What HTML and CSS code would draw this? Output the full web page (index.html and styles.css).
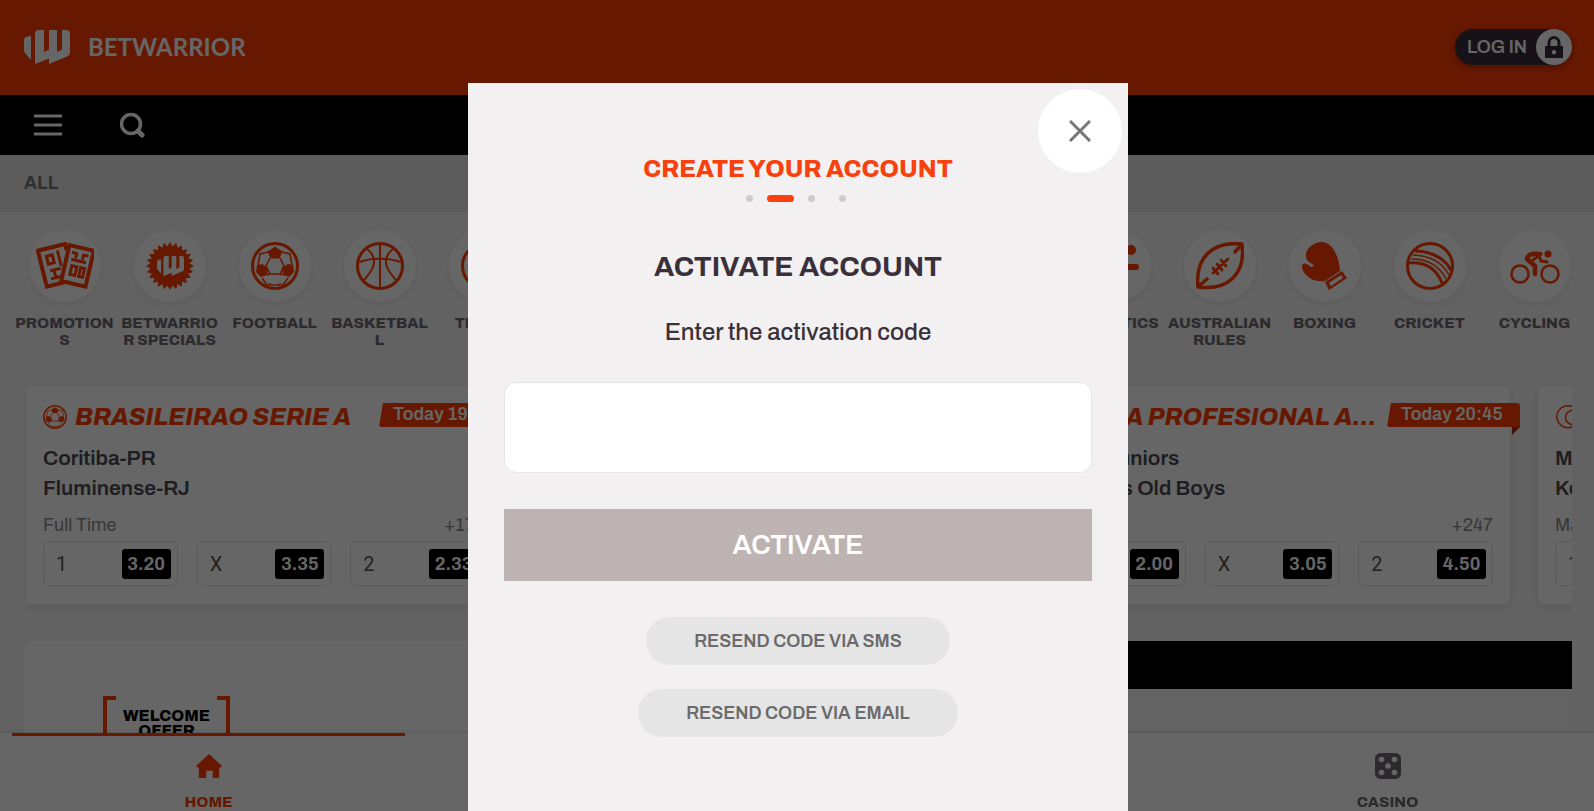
FILE: index.html
```html
<!DOCTYPE html>
<html lang="en">
<head>
    <meta charset="UTF-8">
    <meta name="viewport" content="width=device-width, initial-scale=1.0">
    <title>BetWarrior - Activate Account</title>
    <link rel="stylesheet" href="styles.css">
</head>
<body>
    <svg class="sprite" aria-hidden="true">
        <symbol id="mark" viewBox="0 0 46 34">
            <path d="M7 6v24L1 23Q0 22 0 20V10Q0 7 3 6.500z"/>
            <path d="M11 4Q11 0 15 0h5v22l5-2.500V0h8v22l5-2.500V0h4q4 0 4 4v18q0 3-3 4.500L25 34v-5.500L11 34z"/>
        </symbol>
        <symbol id="football" viewBox="0 0 48 48">
            <circle cx="24" cy="24" r="22.500" fill="none" stroke="currentColor" stroke-width="3"/>
            <path d="M24 4.500l7.500 5-3 7h-9l-3-7zM6 23l5-1 6 4-1 7-6 2-5-5zM42 23l-5-1-6 4 1 7 6 2 5-5z"/>
            <path d="M19 16l-4 8 4 8h10l4-8-4-8M19 32l-3 1M29 32l3 1M17 10L9 12 7 23M31 10l8 2 2 11M11 36l5 7 4-1M37 36l-5 7-4-1M19 43h10" fill="none" stroke="currentColor" stroke-width="1.600"/>
        </symbol>
        <symbol id="tooth" viewBox="0 0 48 48">
            <path d="M24 0l20.800 36H3.200z"/>
        </symbol>
    </svg>

    <header class="header">
        <a class="brand" href="#">
            <svg class="brand-mark"><use href="#mark"/></svg>
            <span class="brand-name">BETWARRIOR</span>
        </a>
        <button class="login" type="button">
            <span>LOG IN</span>
            <span class="login-icon">
                <svg width="18" height="22" viewBox="0 0 18 22"><path d="M4 11V6.500a5 5 0 0 1 10 0V11" fill="none" stroke="currentColor" stroke-width="3"/><path fill-rule="evenodd" d="M0 10h18v12H0zM9 14a2.200 2.200 0 1 0 0 4.400a2.200 2.200 0 1 0 0-4.400z"/></svg>
            </span>
        </button>
    </header>

    <nav class="toolbar">
        <button type="button" aria-label="Menu">
            <svg width="28" height="22" viewBox="0 0 28 22"><path d="M0 2h28M0 11h28M0 20h28" stroke="currentColor" stroke-width="3"/></svg>
        </button>
        <button type="button" aria-label="Search">
            <svg width="26" height="26" viewBox="0 0 26 26" fill="none" stroke="currentColor"><circle cx="11" cy="12" r="9.500" stroke-width="3.500"/><path d="M18 19l4 4" stroke-width="5" stroke-linecap="round"/></svg>
        </button>
    </nav>

    <div class="filter"><a href="#">ALL</a></div>

    <nav class="sports">
        <a class="sport" href="#">
            <span class="sport-icon">
                <svg width="58" height="48" viewBox="0 0 58 48" fill="none" stroke="currentColor" stroke-width="3">
                    <g transform="translate(17 24) rotate(-14)">
                        <path d="M17-12v-6.500H-11v37H7" stroke-width="4"/>
                        <path d="M-4-11h6v8h-6zM8-14V2M-4 4H7M0 4v8M-5 12h10"/>
                    </g>
                    <g transform="translate(42 24) rotate(13)">
                        <path d="M-13-18.500h25v37h-25z" stroke-width="4"/>
                        <path d="M-9-12h5M8-12H3M-4-13v6M3-13v6M-8-5H7M-6 1h5v9h-5zM3 1h4v9H3z"/>
                    </g>
                </svg>
            </span>
            PROMOTIONS
        </a>
        <a class="sport" href="#">
            <span class="sport-icon">
                <svg width="48" height="48" viewBox="0 0 48 48">
                    <use href="#tooth"/>
                    <use href="#tooth" transform="rotate(15 24 24)"/>
                    <use href="#tooth" transform="rotate(30 24 24)"/>
                    <use href="#tooth" transform="rotate(45 24 24)"/>
                    <use href="#tooth" transform="rotate(60 24 24)"/>
                    <use href="#tooth" transform="rotate(75 24 24)"/>
                    <use href="#tooth" transform="rotate(90 24 24)"/>
                    <use href="#tooth" transform="rotate(105 24 24)"/>
                    <svg class="specials-mark" x="11" y="14" width="27" height="20"><use href="#mark"/></svg>
                </svg>
            </span>
            BETWARRIOR SPECIALS
        </a>
        <a class="sport" href="#">
            <span class="sport-icon"><svg width="48" height="48"><use href="#football"/></svg></span>
            FOOTBALL
        </a>
        <a class="sport" href="#">
            <span class="sport-icon">
                <svg width="48" height="48" viewBox="0 0 48 48" fill="none" stroke="currentColor" stroke-width="2"><circle cx="24" cy="24" r="22.500" stroke-width="3"/><path d="M24 2v44M3 20q21-7 42 0M11 7q10 8 6 18-2 5-9 13M37 7q-10 8-6 18 2 5 9 13"/></svg>
            </span>
            BASKETBALL
        </a>
        <a class="sport" href="#">
            <span class="sport-icon">
                <svg width="48" height="48" viewBox="0 0 48 48" fill="none" stroke="currentColor" stroke-width="3"><circle cx="24" cy="24" r="22.500"/><path d="M36 6q-12 18 0 36"/></svg>
            </span>
            TENNIS
        </a>
        <a class="sport" href="#" aria-label="Baseball"><span class="sport-icon"></span></a>
        <a class="sport" href="#" aria-label="Volleyball"><span class="sport-icon"></span></a>
        <a class="sport" href="#" aria-label="Handball"><span class="sport-icon"></span></a>
        <a class="sport" href="#" aria-label="Rugby"><span class="sport-icon"></span></a>
        <a class="sport" href="#" aria-label="Golf"><span class="sport-icon"></span></a>
        <a class="sport" href="#">
            <span class="sport-icon">
                <svg width="48" height="48" viewBox="0 0 48 48"><circle cx="40" cy="8" r="5"/><path d="M8 12h16l8 13h13M28 22L14 44" fill="none" stroke="currentColor" stroke-width="6" stroke-linecap="round" stroke-linejoin="round"/></svg>
            </span>
            ATHLETICS
        </a>
        <a class="sport whole-words" href="#">
            <span class="sport-icon">
                <svg width="48" height="48" viewBox="0 0 48 48" fill="none" stroke="currentColor" stroke-width="3.500" stroke-linecap="round" stroke-linejoin="round"><path d="M2 45C-1 16 16-1 46 2C50 32 32 49 2 45zM3 44l8-7M45 3l-6 7"/><path d="M17 31l15-14M17 26l5 6M21 22l5 6M25 18l5 6" stroke-width="2.800"/></svg>
            </span>
            AUSTRALIAN RULES
        </a>
        <a class="sport" href="#">
            <span class="sport-icon">
                <svg width="48" height="48" viewBox="0 0 48 48"><path d="M6 18C1 9 12 0 21 0c9 0 17 12 18 29L24 39c-8 1-14-1-19-6C1 28 0 24 2 22q3-2 8 3l3-1c0-2-5-3-7-6z"/><path fill-rule="evenodd" d="M24 40l17-11 5 7-18 12zM28 41l2 3 12-8-2-3z"/></svg>
            </span>
            BOXING
        </a>
        <a class="sport" href="#">
            <span class="sport-icon">
                <svg width="48" height="48" viewBox="0 0 48 48" fill="none" stroke="currentColor" stroke-width="3"><circle cx="24" cy="24" r="22.500"/><path d="M9 9q26 1 36 19M3 21q24-2 33 20"/><path d="M7 13q26 1 36 20M5 17q25 0 35 20" stroke-width="1.500"/></svg>
            </span>
            CRICKET
        </a>
        <a class="sport" href="#">
            <span class="sport-icon">
                <svg width="50" height="48" viewBox="0 0 50 48" fill="none" stroke="currentColor" stroke-width="2.500"><circle cx="10" cy="32" r="8.500"/><circle cx="40" cy="32" r="8.500"/><circle cx="38" cy="12" r="3.500" fill="currentColor" stroke="none"/><path d="M30 12q-12-1-13 5l8 7v8" stroke-width="4.500" stroke-linecap="round" stroke-linejoin="round"/><path d="M31 12l-8 6M29 14l2 5 6 1" stroke-width="3" stroke-linecap="round"/></svg>
            </span>
            CYCLING
        </a>
    </nav>

    <main class="content">
        <section class="matches">
            <article class="match">
                <div class="match-top">
                    <svg class="league-icon"><use href="#football"/></svg>
                    <h2>BRASILEIRAO SERIE A</h2>
                    <time class="ribbon">Today 19:00</time>
                </div>
                <p class="team">Coritiba-PR</p>
                <p class="team">Fluminense-RJ</p>
                <div class="market"><span>Full Time</span><span>+173</span></div>
                <div class="odds">
                    <button type="button">1<b>3.20</b></button>
                    <button type="button">X<b>3.35</b></button>
                    <button type="button">2<b>2.33</b></button>
                </div>
            </article>
            <article class="match"></article>
            <article class="match">
                <div class="match-top">
                    <svg class="league-icon"><use href="#football"/></svg>
                    <h2>LIGA PROFESIONAL ARGENTINA</h2>
                    <time class="ribbon">Today 20:45</time>
                </div>
                <p class="team">Boca Juniors</p>
                <p class="team">Newell's Old Boys</p>
                <div class="market"><span>Full Time</span><span>+247</span></div>
                <div class="odds">
                    <button type="button">1<b>2.00</b></button>
                    <button type="button">X<b>3.05</b></button>
                    <button type="button">2<b>4.50</b></button>
                </div>
            </article>
            <article class="match">
                <div class="match-top">
                    <svg class="league-icon" viewBox="0 0 24 24" fill="none" stroke="currentColor"><path d="M18 2a11 11 0 1 0 2 18q-3 0-5-1a7 7 0 0 1 0-13q2-1 4-1z" stroke-width="1.500"/></svg>
                </div>
                <p class="team">Medvedev</p>
                <p class="team">Kecmanovic</p>
                <div class="market"><span>Match Odds</span></div>
                <div class="odds">
                    <button type="button">1</button>
                </div>
            </article>
        </section>

        <section class="lower">
            <div class="promo">
                <div class="offer">WELCOME<br>OFFER</div>
            </div>
            <aside class="betslip"><div class="betslip-head"></div></aside>
        </section>
    </main>

    <nav class="tabs">
        <a class="tab active" href="#">
            <svg width="28" height="28" viewBox="0 0 28 28"><path d="M14 1l14 13-1.500 1.500H25V27h-7v-8h-7v8H3V15.500H1.500L0 14z"/></svg>
            HOME
        </a>
        <a class="tab" href="#" aria-label="Sports"></a>
        <a class="tab" href="#" aria-label="Live"></a>
        <a class="tab" href="#">
            <svg width="28" height="28" viewBox="0 0 28 28"><rect width="28" height="28" rx="6"/><g fill="#fff"><circle cx="7" cy="7" r="3"/><circle cx="21" cy="7" r="3"/><circle cx="14" cy="14" r="3"/><circle cx="7" cy="21" r="3"/><circle cx="21" cy="21" r="3"/></g></svg>
            CASINO
        </a>
    </nav>

    <div class="overlay">
        <form class="modal" role="dialog" aria-labelledby="modal-title">
            <button class="close" type="button" aria-label="Close">
                <svg width="22" height="22" viewBox="0 0 22 22"><path d="M1 1l20 20M21 1L1 21" stroke="currentColor" stroke-width="3"/></svg>
            </button>
            <h1 id="modal-title">CREATE YOUR ACCOUNT</h1>
            <ol class="steps">
                <li></li>
                <li class="current"></li>
                <li></li>
                <li></li>
            </ol>
            <h2>ACTIVATE ACCOUNT</h2>
            <label for="code">Enter the activation code</label>
            <input type="text" id="code" name="code">
            <button class="activate" type="submit">ACTIVATE</button>
            <button class="resend" type="button">RESEND CODE VIA SMS</button>
            <button class="resend" type="button">RESEND CODE VIA EMAIL</button>
        </form>
    </div>
</body>
</html>
```
FILE: styles.css
```css
* {
    box-sizing: border-box;
}
body {
    font-family: "Archivo", "Liberation Sans", Arial, sans-serif;
    background-color: #f5f5f7;
    color: #3a303a;
    height: 100vh;
    margin: 0;
    overflow: hidden;
}
h1, h2, p, ol {
    margin: 0;
    padding: 0;
}
a {
    color: inherit;
    text-decoration: none;
}
button {
    font-family: inherit;
    border: none;
    padding: 0;
    cursor: pointer;
}
svg {
    fill: currentColor;
    display: block;
}
svg[fill="none"] {
    fill: none;
}
.sprite {
    display: none;
}

/* header */
.header {
    display: flex;
    justify-content: space-between;
    align-items: center;
    height: 95px;
    padding: 0 22px 2px 24px;
    background: #ff3c00;
}
.brand {
    display: flex;
    align-items: center;
    gap: 18px;
    color: #fff;
}
.brand-mark {
    width: 46px;
    height: 34px;
}
.brand-name {
    font-family: Lato, sans-serif;
    font-size: 24px;
    font-weight: bold;
    line-height: 28px;
}
.login {
    display: flex;
    align-items: center;
    gap: 9px;
    height: 36px;
    padding-left: 12px;
    border-radius: 18px;
    background: #3a2d3a;
    color: #fff;
    font-size: 18px;
    font-weight: 600;
    box-shadow: 0 2px 6px rgba(0, 0, 0, 0.3);
}
.login-icon {
    display: flex;
    justify-content: center;
    align-items: center;
    width: 36px;
    height: 36px;
    border-radius: 50%;
    background: #fff;
    color: #3a2d3a;
}
.toolbar {
    display: flex;
    align-items: center;
    gap: 58px;
    height: 60px;
    padding-left: 34px;
    background: #000;
}
.toolbar button {
    background: none;
    color: #fff;
}
.filter {
    display: flex;
    align-items: center;
    height: 57px;
    padding: 0 24px 2px;
    background: #e6e6e6;
    color: #777;
    font-size: 18px;
    font-weight: bold;
}

/* sports */
.sports {
    display: flex;
    height: 173px;
    padding: 18px 0 0 12px;
    overflow: hidden;
}
.sport {
    flex: 0 0 105px;
    min-width: 0;
    font-size: 15px;
    font-weight: 800;
    line-height: 17px;
    text-align: center;
    word-break: break-all;
    color: #6e6a70;
}
.sport.whole-words {
    word-break: normal;
}
.sport-icon {
    display: flex;
    justify-content: center;
    align-items: center;
    width: 72px;
    height: 72px;
    margin: 0 auto 13px;
    border-radius: 50%;
    background: #fff;
    color: #ff3c00;
    box-shadow: 0 3px 6px rgba(0, 0, 0, 0.06);
}
.specials-mark {
    fill: #fff;
}

/* matches */
.content {
    padding: 0 22px 0 25px;
}
.matches {
    display: flex;
    gap: 26px;
    height: 256px;
    overflow: hidden;
}
.match {
    flex: 0 0 478px;
    min-width: 0;
    height: 220px;
    padding: 17px;
    border: 1px solid #ececec;
    border-radius: 6px;
    background: #fff;
    box-shadow: 0 4px 8px rgba(0, 0, 0, 0.08);
}
.match-top {
    display: flex;
    align-items: center;
    gap: 8px;
    height: 28px;
    margin: 0 -27px 12px 0;
    color: #ff3c00;
}
.league-icon {
    flex: none;
    width: 24px;
    height: 24px;
}
.match h2 {
    flex: 1;
    min-width: 0;
    overflow: hidden;
    font-size: 24px;
    font-style: italic;
    font-weight: 800;
    line-height: 28px;
    white-space: nowrap;
    text-overflow: ellipsis;
}
.ribbon {
    position: relative;
    flex: none;
    width: 133px;
    height: 24px;
    margin-bottom: 4px;
    padding-left: 14px;
    border-radius: 3px 3px 0 3px;
    background: #ff3c00;
    color: #fff;
    font-size: 18px;
    font-weight: 600;
    line-height: 22px;
    clip-path: polygon(4px 0, 100% 0, 100% 200%, 0 200%, 0 100%);
}
.ribbon::after {
    content: "";
    position: absolute;
    top: 24px;
    right: 0;
    border-top: 8px solid #b32a00;
    border-right: 8px solid transparent;
}
.team {
    font-size: 21px;
    font-weight: 600;
    line-height: 30px;
    color: #4d4a52;
}
.market {
    display: flex;
    justify-content: space-between;
    margin-top: 10px;
    font-size: 18px;
    line-height: 24px;
    color: #8a8a8a;
    white-space: nowrap;
}
.odds {
    display: flex;
    gap: 19px;
    margin-top: 4px;
}
.odds button {
    flex: 1;
    display: flex;
    justify-content: space-between;
    align-items: center;
    height: 45px;
    padding: 0 6px 0 12px;
    border: 1px solid #e3e3e3;
    border-radius: 5px;
    background: #fff;
    color: #555;
    font-family: Roboto, sans-serif;
    font-size: 20px;
}
.odds b {
    width: 49px;
    border-radius: 3px;
    background: #000;
    color: #fff;
    font-family: "Archivo", "Liberation Sans", Arial, sans-serif;
    font-size: 18px;
    line-height: 30px;
    text-align: center;
}

/* promo and betslip */
.lower {
    display: flex;
    gap: 26px;
    height: 170px;
}
.promo {
    flex: 1;
    padding: 55px 78px;
    border-radius: 6px;
    background: #fff;
}
.offer {
    width: 127px;
    height: 90px;
    padding-top: 12px;
    border: solid #ff3c00;
    border-width: 0 4px;
    background: linear-gradient(90deg, #ff3c00 9px, transparent 9px 110px, #ff3c00 110px) top / 100% 4px no-repeat;
    color: #000;
    font-size: 16px;
    font-weight: 800;
    line-height: 15px;
    text-align: center;
}
.betslip {
    flex: 0 0 478px;
    background: #f7f7f7;
}
.betslip-head {
    height: 48px;
    background: #000;
}

/* bottom tabs */
.tabs {
    position: fixed;
    right: 0;
    bottom: 0;
    left: 0;
    display: flex;
    height: 78px;
    padding: 0 10px 0 12px;
    background: #fff;
    box-shadow: 0 -1px 3px rgba(0, 0, 0, 0.12);
}
.tab {
    flex: 1;
    display: flex;
    flex-direction: column;
    align-items: center;
    gap: 15px;
    padding-top: 17px;
    border-top: 3px solid transparent;
    font-size: 15px;
    font-weight: 800;
    line-height: 17px;
    color: #6e6a70;
}
.tab.active {
    border-color: #ff3c00;
    color: #ff3c00;
}

/* modal */
.overlay {
    position: fixed;
    inset: 0;
    display: flex;
    justify-content: center;
    padding: 83px 0 0 2px;
    background: rgba(0, 0, 0, 0.6);
}
.modal {
    position: relative;
    display: flex;
    flex-direction: column;
    align-items: center;
    width: 660px;
    max-width: 100%;
    padding: 70px 36px 36px;
    background: #f2f0f1;
}
.close {
    position: absolute;
    top: 6px;
    right: 6px;
    display: flex;
    justify-content: center;
    align-items: center;
    width: 84px;
    height: 84px;
    border-radius: 50%;
    background: #fff;
    color: #777;
}
.modal h1 {
    color: #f8410c;
    font-size: 24px;
    font-weight: 800;
    line-height: 32px;
}
.steps {
    display: flex;
    margin-top: 10px;
    padding-right: 4px;
    list-style: none;
}
.steps li {
    width: 7px;
    height: 7px;
    margin: 0 12px;
    border-radius: 4px;
    background: #ccc;
}
.steps .current {
    width: 27px;
    margin: 0 2px;
    background: #f8410c;
}
.modal h2 {
    margin-top: 48px;
    font-size: 28px;
    line-height: 34px;
}
.modal label {
    margin-top: 32px;
    font-size: 24px;
    font-weight: 500;
    line-height: 32px;
}
.modal input {
    width: 100%;
    height: 91px;
    margin-top: 34px;
    padding: 0 24px;
    border: 1px solid #e6e4e5;
    border-radius: 12px;
    background: #fff;
    font-size: 28px;
}
.activate {
    width: 100%;
    height: 72px;
    margin: 36px 0 12px;
    background: #bdb3b2;
    color: #fff;
    font-size: 27px;
    font-weight: 600;
}
.resend {
    height: 48px;
    margin-top: 24px;
    padding: 0 48px;
    border-radius: 24px;
    background: #e5e5e5;
    color: #6b6b6b;
    font-size: 18px;
    font-weight: 600;
}
```
